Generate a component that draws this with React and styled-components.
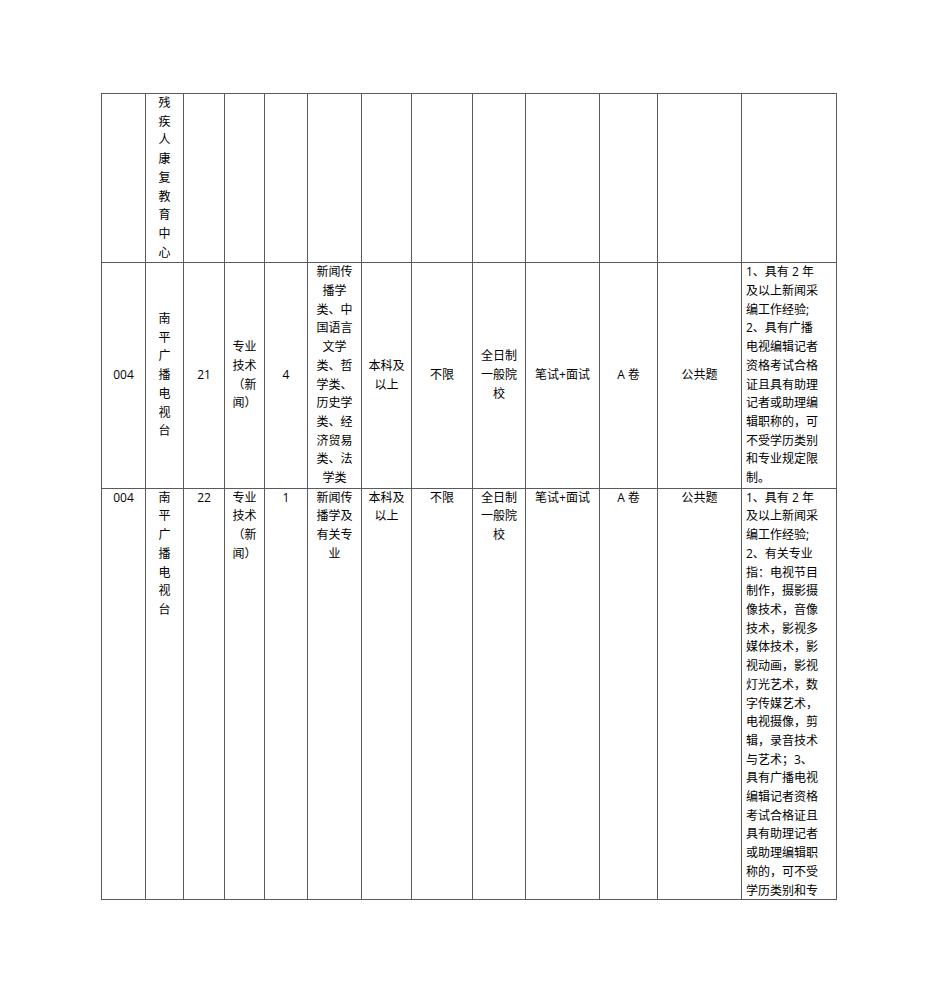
import React from 'react';
import styled, { createGlobalStyle } from 'styled-components';

const GlobalStyle = createGlobalStyle`
  html, body {
    margin: 0;
    padding: 0;
    background: #ffffff;
  }
  body {
    font-family: "Open Sans", "Noto Sans CJK SC", "Noto Sans", sans-serif;
    color: #000000;
  }
`;

const Page = styled.div`
  width: 950px;
  min-height: 1008px;
  box-sizing: border-box;
  padding: 93px 0 0 101px;
`;

const Table = styled.table`
  width: 735px;
  table-layout: fixed;
  border-collapse: collapse;
  font-size: 12px;
  line-height: 18.7px;
`;

const Cell = styled.td`
  border: 1px solid #5a5a5a;
  padding: 0 4px;
  text-align: ${(p) => (p.$left ? 'left' : 'center')};
  vertical-align: ${(p) => p.$valign};
  overflow: hidden;
`;

// the last row runs on to the next page, so its text is cut at the bottom
const Body = styled.div`
  max-height: ${(p) => (p.$clip ? `${p.$clip}px` : 'none')};
  overflow: hidden;
`;

const Line = styled.div`
  white-space: nowrap;
`;

const widths = [44, 38, 41, 40, 43, 54, 50, 61, 53, 74, 58, 84, 95];

const station = ['南', '平', '广', '播', '电', '视', '台'];
const post = ['专业', '技术', '（新', '闻）'];

const rows = [
  {
    valign: 'top',
    cells: [
      [],
      ['残', '疾', '人', '康', '复', '教', '育', '中', '心'],
      [], [], [], [], [], [], [], [], [], [], [],
    ],
  },
  {
    valign: 'middle',
    cells: [
      ['004'],
      station,
      ['21'],
      post,
      ['4'],
      ['新闻传', '播学', '类、中', '国语言', '文学', '类、哲', '学类、', '历史学', '类、经', '济贸易', '类、法', '学类'],
      ['本科及', '以上'],
      ['不限'],
      ['全日制', '一般院', '校'],
      ['笔试+面试'],
      ['A 卷'],
      ['公共题'],
      [
        '1、具有 2 年',
        '及以上新闻采',
        '编工作经验;',
        '2、具有广播',
        '电视编辑记者',
        '资格考试合格',
        '证且具有助理',
        '记者或助理编',
        '辑职称的，可',
        '不受学历类别',
        '和专业规定限',
        '制。',
      ],
    ],
  },
  {
    valign: 'top',
    clip: 410,
    cells: [
      ['004'],
      station,
      ['22'],
      post,
      ['1'],
      ['新闻传', '播学及', '有关专', '业'],
      ['本科及', '以上'],
      ['不限'],
      ['全日制', '一般院', '校'],
      ['笔试+面试'],
      ['A 卷'],
      ['公共题'],
      [
        '1、具有 2 年',
        '及以上新闻采',
        '编工作经验;',
        '2、有关专业',
        '指：电视节目',
        '制作，摄影摄',
        '像技术，音像',
        '技术，影视多',
        '媒体技术，影',
        '视动画，影视',
        '灯光艺术，数',
        '字传媒艺术，',
        '电视摄像，剪',
        '辑，录音技术',
        '与艺术；3、',
        '具有广播电视',
        '编辑记者资格',
        '考试合格证且',
        '具有助理记者',
        '或助理编辑职',
        '称的，可不受',
        '学历类别和专',
      ],
    ],
  },
];

const App = () => (
  <>
    <GlobalStyle />
    <Page>
      <Table>
        <colgroup>
          {widths.map((w, i) => (
            <col key={i} style={{ width: w }} />
          ))}
        </colgroup>
        <tbody>
          {rows.map((row, r) => (
            <tr key={r}>
              {row.cells.map((lines, c) => (
                <Cell key={c} $valign={row.valign} $left={c === 12}>
                  <Body $clip={row.clip}>
                    {lines.map((t, k) => (
                      <Line key={k}>{t}</Line>
                    ))}
                  </Body>
                </Cell>
              ))}
            </tr>
          ))}
        </tbody>
      </Table>
    </Page>
  </>
);

export default App;
